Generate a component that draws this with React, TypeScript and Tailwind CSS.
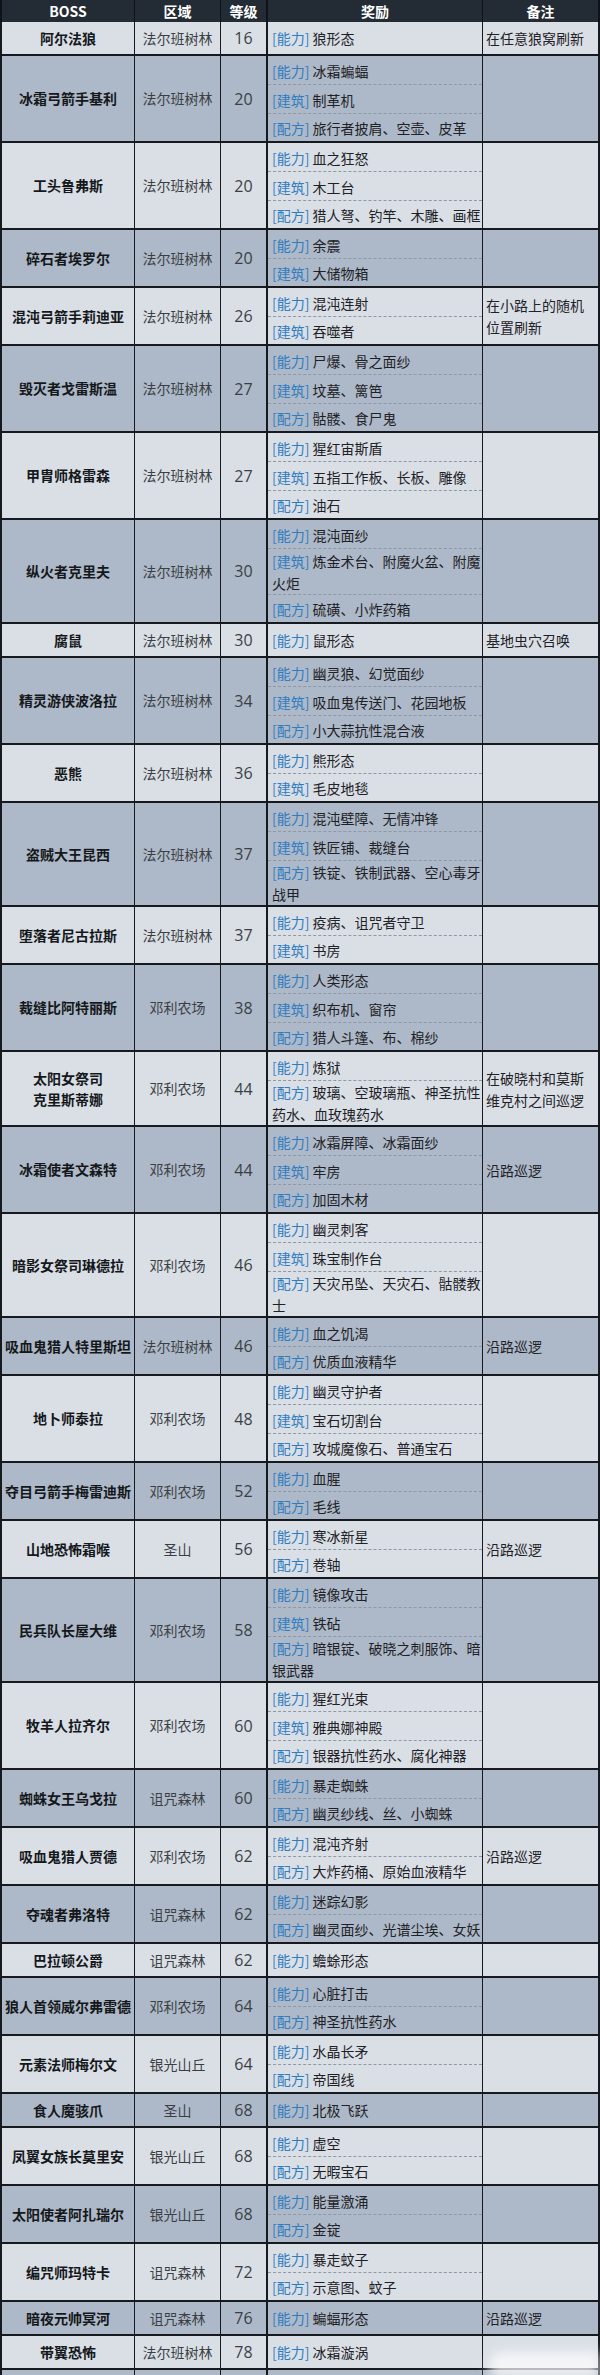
import React from 'react';

type Tag = '能力' | '建筑' | '配方';

interface Reward {
  tag: Tag;
  text: string;
}

interface BossRow {
  name: string[];
  area: string;
  level: number | null;
  rewards: Reward[];
  note?: string;
}

// '|' marks where the original table wraps a long reward onto a second line
const ab = (text: string): Reward => ({ tag: '能力', text });
const bd = (text: string): Reward => ({ tag: '建筑', text });
const rc = (text: string): Reward => ({ tag: '配方', text });

const rows: BossRow[] = [
  { name: ['阿尔法狼'], area: '法尔班树林', level: 16, rewards: [ab('狼形态')], note: '在任意狼窝刷新' },
  { name: ['冰霜弓箭手基利'], area: '法尔班树林', level: 20, rewards: [ab('冰霜蝙蝠'), bd('制革机'), rc('旅行者披肩、空壶、皮革')] },
  { name: ['工头鲁弗斯'], area: '法尔班树林', level: 20, rewards: [ab('血之狂怒'), bd('木工台'), rc('猎人弩、钓竿、木雕、画框')] },
  { name: ['碎石者埃罗尔'], area: '法尔班树林', level: 20, rewards: [ab('余震'), bd('大储物箱')] },
  { name: ['混沌弓箭手莉迪亚'], area: '法尔班树林', level: 26, rewards: [ab('混沌连射'), bd('吞噬者')], note: '在小路上的随机位置刷新' },
  { name: ['毁灭者戈雷斯温'], area: '法尔班树林', level: 27, rewards: [ab('尸爆、骨之面纱'), bd('坟墓、篱笆'), rc('骷髅、食尸鬼')] },
  { name: ['甲胄师格雷森'], area: '法尔班树林', level: 27, rewards: [ab('猩红宙斯盾'), bd('五指工作板、长板、雕像'), rc('油石')] },
  { name: ['纵火者克里夫'], area: '法尔班树林', level: 30, rewards: [ab('混沌面纱'), bd('炼金术台、附魔火盆、附魔|火炬'), rc('硫磺、小炸药箱')] },
  { name: ['腐鼠'], area: '法尔班树林', level: 30, rewards: [ab('鼠形态')], note: '基地虫穴召唤' },
  { name: ['精灵游侠波洛拉'], area: '法尔班树林', level: 34, rewards: [ab('幽灵狼、幻觉面纱'), bd('吸血鬼传送门、花园地板'), rc('小大蒜抗性混合液')] },
  { name: ['恶熊'], area: '法尔班树林', level: 36, rewards: [ab('熊形态'), bd('毛皮地毯')] },
  { name: ['盗贼大王昆西'], area: '法尔班树林', level: 37, rewards: [ab('混沌壁障、无情冲锋'), bd('铁匠铺、裁缝台'), rc('铁锭、铁制武器、空心毒牙|战甲')] },
  { name: ['堕落者尼古拉斯'], area: '法尔班树林', level: 37, rewards: [ab('疫病、诅咒者守卫'), bd('书房')] },
  { name: ['裁缝比阿特丽斯'], area: '邓利农场', level: 38, rewards: [ab('人类形态'), bd('织布机、窗帘'), rc('猎人斗篷、布、棉纱')] },
  { name: ['太阳女祭司', '克里斯蒂娜'], area: '邓利农场', level: 44, rewards: [ab('炼狱'), rc('玻璃、空玻璃瓶、神圣抗性|药水、血玫瑰药水')], note: '在破晓村和莫斯维克村之间巡逻' },
  { name: ['冰霜使者文森特'], area: '邓利农场', level: 44, rewards: [ab('冰霜屏障、冰霜面纱'), bd('牢房'), rc('加固木材')], note: '沿路巡逻' },
  { name: ['暗影女祭司琳德拉'], area: '邓利农场', level: 46, rewards: [ab('幽灵刺客'), bd('珠宝制作台'), rc('天灾吊坠、天灾石、骷髅教|士')] },
  { name: ['吸血鬼猎人特里斯坦'], area: '法尔班树林', level: 46, rewards: [ab('血之饥渴'), rc('优质血液精华')], note: '沿路巡逻' },
  { name: ['地卜师泰拉'], area: '邓利农场', level: 48, rewards: [ab('幽灵守护者'), bd('宝石切割台'), rc('攻城魔像石、普通宝石')] },
  { name: ['夺目弓箭手梅雷迪斯'], area: '邓利农场', level: 52, rewards: [ab('血腥'), rc('毛线')] },
  { name: ['山地恐怖霜喉'], area: '圣山', level: 56, rewards: [ab('寒冰新星'), rc('卷轴')], note: '沿路巡逻' },
  { name: ['民兵队长屋大维'], area: '邓利农场', level: 58, rewards: [ab('镜像攻击'), bd('铁砧'), rc('暗银锭、破晓之刺服饰、暗|银武器')] },
  { name: ['牧羊人拉齐尔'], area: '邓利农场', level: 60, rewards: [ab('猩红光束'), bd('雅典娜神殿'), rc('银器抗性药水、腐化神器')] },
  { name: ['蜘蛛女王乌戈拉'], area: '诅咒森林', level: 60, rewards: [ab('暴走蜘蛛'), rc('幽灵纱线、丝、小蜘蛛')] },
  { name: ['吸血鬼猎人贾德'], area: '邓利农场', level: 62, rewards: [ab('混沌齐射'), rc('大炸药桶、原始血液精华')], note: '沿路巡逻' },
  { name: ['夺魂者弗洛特'], area: '诅咒森林', level: 62, rewards: [ab('迷踪幻影'), rc('幽灵面纱、光谱尘埃、女妖')] },
  { name: ['巴拉顿公爵'], area: '诅咒森林', level: 62, rewards: [ab('蟾蜍形态')] },
  { name: ['狼人首领威尔弗雷德'], area: '邓利农场', level: 64, rewards: [ab('心脏打击'), rc('神圣抗性药水')] },
  { name: ['元素法师梅尔文'], area: '银光山丘', level: 64, rewards: [ab('水晶长矛'), rc('帝国线')] },
  { name: ['食人魔骇爪'], area: '圣山', level: 68, rewards: [ab('北极飞跃')] },
  { name: ['凤翼女族长莫里安'], area: '银光山丘', level: 68, rewards: [ab('虚空'), rc('无暇宝石')] },
  { name: ['太阳使者阿扎瑞尔'], area: '银光山丘', level: 68, rewards: [ab('能量激涌'), rc('金锭')] },
  { name: ['编咒师玛特卡'], area: '诅咒森林', level: 72, rewards: [ab('暴走蚊子'), rc('示意图、蚊子')] },
  { name: ['暗夜元帅冥河'], area: '诅咒森林', level: 76, rewards: [ab('蝙蝠形态')], note: '沿路巡逻' },
  { name: ['带翼恐怖'], area: '法尔班树林', level: 78, rewards: [ab('冰霜漩涡')] },
  { name: [''], area: '', level: null, rewards: [] },
];

const font = { fontFamily: '"Noto Sans CJK SC", "Noto Sans", sans-serif' };

const cols = 'grid grid-cols-[135px_86px_47px_215px_117px]';

const RewardItem: React.FC<{ reward: Reward; last: boolean }> = ({ reward, last }) => {
  const [first, ...rest] = reward.text.split('|');
  return (
    <div
      className={
        last
          ? 'flex min-h-[27px] items-center pl-[4px] pr-[1px] leading-[22px]'
          : 'flex min-h-[29px] items-center pl-[4px] pr-[1px] pt-[1px] leading-[22px] border-b border-dashed border-[#8e99a6]'
      }
    >
      <div className="whitespace-nowrap">
        <div>
          <span className="text-[#2f7cc0]">[{reward.tag}]</span>{' '}
          <span className="text-[#1e2226]">{first}</span>
        </div>
        {rest.map((line, i) => (
          <div key={i} className="text-[#1e2226]">
            {line}
          </div>
        ))}
      </div>
    </div>
  );
};

const Row: React.FC<{ row: BossRow; dark: boolean }> = ({ row, dark }) => (
  <div
    className={`${cols} min-h-[34px] border-b-2 border-[#16191d] text-[14px] ${
      dark ? 'bg-[#adb9c8]' : 'bg-[#dadfe6]'
    }`}
  >
    <div className="flex flex-col items-center justify-center border-l-2 border-r border-[#16191d] font-bold text-[#15181b] leading-[21px] text-center">
      {row.name.map((n, i) => (
        <span key={i}>{n}</span>
      ))}
    </div>
    <div className="flex items-center justify-center border-r border-[#16191d] text-[#3b3f44]">{row.area}</div>
    <div
      className="flex items-center justify-center border-r-2 border-[#16191d] text-[16px] text-[#3b3f44]"
      style={{ fontFamily: '"Open Sans", "Noto Sans", sans-serif' }}
    >
      {row.level}
    </div>
    <div className="flex flex-col justify-center border-r border-[#16191d]">
      {row.rewards.map((r, i) => (
        <RewardItem key={i} reward={r} last={i === row.rewards.length - 1} />
      ))}
    </div>
    <div className="flex items-center border-r-2 border-[#16191d] pl-[3px] pr-[6px] leading-[22px] text-[#1e2226]">
      {row.note}
    </div>
  </div>
);

export default function App() {
  return (
    <div className="relative w-[600px] bg-white" style={font}>
      <div className={`${cols} h-[22px] bg-[#232c35] text-[14px] font-bold text-white`}>
        <div className="flex items-center justify-center border-l-2 border-r border-[#0f1216]">BOSS</div>
        <div className="flex items-center justify-center border-r border-[#0f1216]">区域</div>
        <div className="flex items-center justify-center border-r-2 border-[#0f1216]">等级</div>
        <div className="flex items-center justify-center border-r border-[#0f1216]">奖励</div>
        <div className="flex items-center justify-center border-r-2 border-[#0f1216]">备注</div>
      </div>
      {rows.map((row, i) => (
        <Row key={i} row={row} dark={i % 2 === 1} />
      ))}
      <div className="pointer-events-none absolute left-[488px] top-[2352px] h-[30px] w-[112px] rounded-l-full bg-white/70 blur-[6px]" />
    </div>
  );
}
